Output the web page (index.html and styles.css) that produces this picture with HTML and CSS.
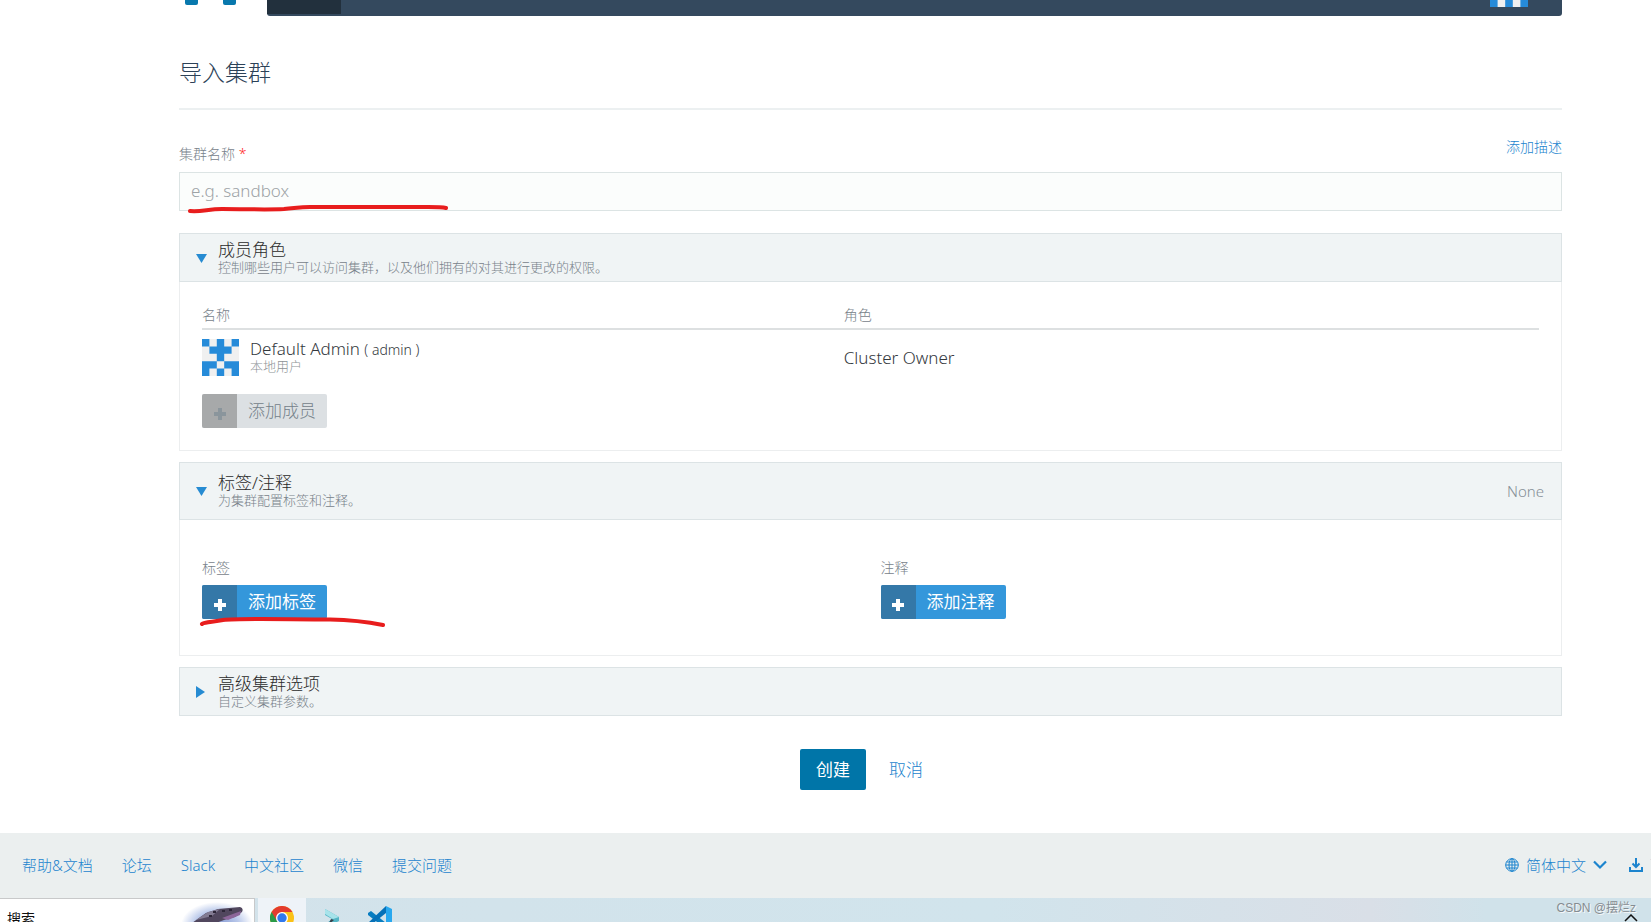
FILE: index.html
```html
<!DOCTYPE html>
<html lang="zh-CN">
<head>
<meta charset="utf-8">
<title>导入集群</title>
<link rel="stylesheet" href="styles.css">
</head>
<body>
<svg class="defs" aria-hidden="true">
  <symbol id="avatar" viewBox="0 0 5 5" preserveAspectRatio="none">
    <rect width="5" height="5" fill="#f0f0f0"/>
    <path fill="#268bd9" d="M0 0h1v1H0zM2 0h1v1H2zM4 0h1v1H4zM1 1h3v1H1zM2 2h1v1H2zM0 3h2v1H0zM3 3h2v1H3zM0 4h1v1H0zM2 4h1v1H2zM4 4h1v1H4z"/>
  </symbol>
  <symbol id="plus" viewBox="0 0 14 14"><path fill="currentColor" d="M5 1h4v4h4v4H9v4H5V9H1V5h4z"/></symbol>
</svg>
<div class="page">
  <header class="topbar">
    <div class="logo"><span></span><span></span></div>
    <nav class="nav">
      <span class="nav-home"></span>
      <svg class="nav-avatar" aria-hidden="true"><use href="#avatar"/></svg>
    </nav>
  </header>

  <main class="content">
    <h1 class="title">导入集群</h1>

    <div class="field">
      <div class="field-head">
        <label for="cluster-name" class="label">集群名称 <span class="required">*</span></label>
        <a href="#" class="link">添加描述</a>
      </div>
      <input id="cluster-name" class="input" type="text" placeholder="e.g. sandbox">
      <svg class="mark mark-name" viewBox="0 0 264 12" aria-hidden="true"><path d="M2 6C14 7 20 4 34 4C60 4 78 5 96 4C108 3 112 2 122 2L240 2Q254 2 258 3"/></svg>
    </div>

    <section class="panel">
      <header class="panel-head">
        <svg class="arrow" viewBox="0 0 12 12" aria-hidden="true"><path d="M0 2h11L5.500 11z"/></svg>
        <div class="panel-text"><h2>成员角色</h2><p>控制哪些用户可以访问集群，以及他们拥有的对其进行更改的权限。</p></div>
      </header>
      <div class="panel-body members">
        <table class="table">
          <thead><tr><th class="col-name">名称</th><th>角色</th></tr></thead>
          <tbody><tr>
            <td><div class="user">
              <svg class="avatar" aria-hidden="true"><use href="#avatar"/></svg>
              <div><div class="user-name">Default Admin <small>( admin )</small></div><div class="user-kind">本地用户</div></div>
            </div></td>
            <td>Cluster Owner</td>
          </tr></tbody>
        </table>
        <button class="add" type="button" disabled><span class="add-icon"><svg aria-hidden="true"><use href="#plus"/></svg></span><span class="add-text">添加成员</span></button>
      </div>
    </section>

    <section class="panel">
      <header class="panel-head tall">
        <svg class="arrow" viewBox="0 0 12 12" aria-hidden="true"><path d="M0 2h11L5.500 11z"/></svg>
        <div class="panel-text"><h2>标签/注释</h2><p>为集群配置标签和注释。</p></div>
        <span class="status">None</span>
      </header>
      <div class="panel-body columns">
        <div class="column">
          <div class="label">标签</div>
          <button class="add" type="button"><span class="add-icon"><svg aria-hidden="true"><use href="#plus"/></svg></span><span class="add-text">添加标签</span></button>
          <svg class="mark mark-label" viewBox="0 0 188 12" aria-hidden="true"><path d="M2 7C4 5 14 5 23 3C40 1 90 2.500 130 2.500Q158 3 183 8"/></svg>
        </div>
        <div class="column">
          <div class="label">注释</div>
          <button class="add" type="button"><span class="add-icon"><svg aria-hidden="true"><use href="#plus"/></svg></span><span class="add-text">添加注释</span></button>
        </div>
      </div>
    </section>

    <section class="panel">
      <header class="panel-head">
        <svg class="arrow" viewBox="0 0 12 12" aria-hidden="true"><path d="M0 0v12l9-6z"/></svg>
        <div class="panel-text"><h2>高级集群选项</h2><p>自定义集群参数。</p></div>
      </header>
    </section>

    <div class="actions">
      <button class="create" type="button">创建</button>
      <button class="cancel" type="button">取消</button>
    </div>
  </main>

  <footer class="footer">
    <nav class="footer-links">
      <a href="#">帮助&amp;文档</a><a href="#">论坛</a><a href="#">Slack</a><a href="#">中文社区</a><a href="#">微信</a><a href="#">提交问题</a>
    </nav>
    <div class="footer-tools">
      <a href="#" class="language">
        <svg width="14" height="14" viewBox="0 0 14 14" aria-hidden="true"><g fill="none" stroke="currentColor"><circle cx="7" cy="7" r="6.300"/><ellipse cx="7" cy="7" rx="3" ry="6.300"/><path d="M7 .7v12.600M.7 7h12.600M1.500 4h11M1.500 10h11"/></g></svg>
        <span>简体中文</span>
        <svg width="14" height="10" viewBox="0 0 14 10" aria-hidden="true"><path d="M1 1.500l6 6 6-6" fill="none" stroke="currentColor" stroke-width="2.200"/></svg>
      </a>
      <a href="#" class="download">
        <svg width="14" height="14" viewBox="0 0 14 14" aria-hidden="true"><path d="M1 9v4h12V9M7 0v9M3.500 5.500L7 9l3.500-3.500" fill="none" stroke="currentColor" stroke-width="2"/></svg>
        <span>下载CLI</span>
      </a>
    </div>
  </footer>

  <div class="taskbar">
    <div class="search"><span>搜索</span>
      <svg width="72" height="24" viewBox="0 0 72 24" aria-hidden="true">
        <defs><radialGradient id="glow"><stop offset="0" stop-color="#7f93cf"/><stop offset=".6" stop-color="#b9c8ea"/><stop offset="1" stop-color="#fff"/></radialGradient></defs>
        <ellipse cx="35" cy="26" rx="36" ry="23" fill="url(#glow)"/>
        <path d="M10 24L24 14 36 10 58 8Q62 9 60 13L53 18 42 21 34 24z" fill="#51475e"/>
        <path d="M14 21l12-8 12-3-8 7z" fill="#827b92"/><path d="M40 19l19-7-1 4-12 5z" fill="#8c6699"/>
        <path d="M31 13h3M40 12h3M27 17h3M47 11h3" stroke="#2d2638" stroke-width="2"/>
      </svg>
    </div>
    <div class="task active">
      <svg width="24" height="24" viewBox="0 0 24 24" aria-hidden="true"><circle cx="12" cy="12" r="12" fill="#fbc116"/><path d="M12 12L1.600 6A12 12 0 0 0 12 24z" fill="#2a9b48"/><path d="M1.600 6A12 12 0 0 1 22.400 6H12l-5 9z" fill="#e33b2e"/><circle cx="12" cy="12" r="6" fill="#fff"/><circle cx="12" cy="12" r="4.700" fill="#3179ed"/></svg>
    </div>
    <div class="task">
      <svg width="24" height="24" viewBox="0 0 24 24" aria-hidden="true"><path d="M5 3l14 8v4L5 22l2-5 5-4-7-4z" fill="#55b5c5"/><path d="M5 3l14 8-6 2-8-5z" fill="#a7e3ea"/><path d="M11 13l3 1-6 5z" fill="#38414b"/></svg>
    </div>
    <div class="task">
      <svg width="24" height="24" viewBox="0 0 24 24" aria-hidden="true"><path d="M0 7l3-2 15 12v6L0 9z" fill="#087dc1"/><path d="M0 17L18 0v7L3 19z" fill="#0671b8"/><path d="M18 0l6 3v18l-6 3z" fill="#28a8ef"/></svg>
    </div>
    <div class="tray">
      <span class="watermark">CSDN @摆烂z</span>
      <svg class="tray-arrow" width="14" height="8" viewBox="0 0 14 8" aria-hidden="true"><path d="M1 7l6-6 6 6" fill="none" stroke="#111" stroke-width="1.500"/></svg>
    </div>
  </div>
</div>
</body>
</html>
```
FILE: styles.css
```css
* { box-sizing: border-box; }
body {
  margin: 0;
  overflow: hidden;
  background: #fff;
  color: #33383d;
  font: 300 17px/20px "Noto Sans", "Noto Sans CJK SC", sans-serif;
}
button, input { font: inherit; }
button { border: 0; padding: 0; cursor: pointer; }
a { color: #1c84ce; text-decoration: none; }
h1, h2, p { margin: 0; font-weight: 300; }
.defs { position: absolute; width: 0; height: 0; }
.page { height: 100vh; display: flex; flex-direction: column; overflow: hidden; }

.topbar { display: flex; height: 16px; flex: none; margin: 0 89px 0 179px; }
.logo { display: flex; width: 88px; gap: 25px; padding-left: 6px; }
.logo span { width: 13px; height: 5px; background: #0878ad; border-radius: 0 0 2px 2px; }
.nav { flex: 1; display: flex; justify-content: space-between; background: #34495e; border-radius: 0 0 3px 3px; }
.nav-home { width: 74px; height: 14px; background: #22303d; }
.nav-avatar { width: 38px; height: 38px; margin: -31px 34px 0 0; }

.content { flex: 1; margin: 0 89px 0 179px; }
.title { padding: 40px 0 20px; border-bottom: 2px solid #ecf0f1; font-size: 23px; line-height: 32px; color: #2c4157; }
.field { position: relative; padding-top: 27px; }
.field-head { display: flex; justify-content: space-between; height: 35px; }
.label { font-size: 14px; color: #78828a; }
.field-head .label { padding-top: 7px; }
.required { color: #f22; }
.link { font-size: 14px; }
.input { display: block; width: 100%; height: 39px; padding: 0 11px 2px; border: 1px solid #dce4e4; border-radius: 0; background: #fbfdfc; color: #33383d; }
.input::placeholder { color: #9da3a6; opacity: 1; }
.mark { position: absolute; fill: none; stroke: #e81d1d; stroke-width: 4; stroke-linecap: round; overflow: visible; }
.mark-name { left: 9px; bottom: -6px; width: 264px; height: 12px; }
.mark-label { left: -2px; top: 59px; width: 188px; height: 12px; }

.panel { margin-top: 11px; border: 1px solid #eceeef; }
.field + .panel { margin-top: 22px; }
.panel-head { display: flex; align-items: center; height: 49px; margin: -1px; padding: 0 17px 0 16px; border: 1px solid #dce3e5; background: #f0f4f5; }
.panel-head.tall { height: 58px; }
.arrow { width: 12px; height: 12px; margin-right: 10px; fill: #268bd2; }
.panel-text { flex: 1; }
.panel-text h2 { font-size: 17px; line-height: 18px; color: #2b2b2b; }
.panel-text p { font-size: 13px; line-height: 16px; color: #78828a; }
.status { font-size: 15px; color: #858f95; }
.panel-body { padding: 22px; }
.table { width: 100%; border-collapse: collapse; table-layout: fixed; }
.table th { padding: 2px 0; height: 26px; border-bottom: 2px solid #dde0e1; font-size: 14px; font-weight: 300; text-align: left; vertical-align: top; color: #78828a; }
.col-name { width: 48%; }
.table td { padding: 9px 0 18px; }
.user { display: flex; gap: 11px; }
.user small { font-size: 14px; }
.user-name { line-height: 19px; }
.user-kind { font-size: 13px; line-height: 14px; color: #8d9396; }
.avatar { width: 37px; height: 37px; }
.add { display: flex; height: 34px; border-radius: 2px; overflow: hidden; background: #3497db; color: #fff; font-size: 17px; font-weight: 400; }
.add-icon { display: flex; width: 35px; height: 100%; align-items: center; justify-content: center; background: #3478a8; padding-top: 5px; }
.add-icon svg { width: 14px; height: 14px; }
.add-text { padding: 0 11px; line-height: 34px; }
.add:disabled { background: #dce0e3; color: #8a959c; font-weight: 300; }
.add:disabled .add-text { color: #74808a; }
.add:disabled .add-icon { background: #a7a9aa; }
.columns { display: grid; grid-template-columns: 1fr 1fr; gap: 20px; padding: 39px 22px 36px; }
.column { position: relative; display: flex; flex-direction: column; align-items: flex-start; gap: 7px; }

.actions { display: flex; justify-content: center; gap: 23px; padding: 33px 18px 43px 0; }
.create { height: 41px; padding: 0 16px; background: #0075a8; color: #fff; border-radius: 2px; font-size: 17px; font-weight: 400; }
.cancel { background: none; color: #1c84ce; font-size: 17px; }

.footer { display: flex; flex: none; justify-content: space-between; align-items: center; height: 65px; padding: 0 0 2px 22px; background: #ebefef; font-size: 15px; }
.footer-links { display: flex; gap: 29px; }
.footer-tools { display: flex; width: 146px; gap: 22px; white-space: nowrap; }
.footer-tools a { display: flex; flex: none; align-items: center; gap: 7px; }

.taskbar { display: flex; flex: none; height: 24px; overflow: hidden; background: linear-gradient(90deg, #d3e2ea, #d1e4ec 60%, #d9dfe7 83%, #d0e2ea 90%); }
.search { display: flex; justify-content: space-between; width: 255px; margin-right: 3px; padding: 0 0 0 7px; border: solid #c8c9ca; border-width: 1px 1px 0 0; background: #fff; color: #111; font-size: 14px; font-weight: 400; }
.search span { padding-top: 10px; }
.task { width: 48px; padding: 8px 12px 0; }
.task.active { background: #eef3f8; margin-right: 2px; }
.tray { margin-left: auto; position: relative; padding-right: 15px; line-height: 16px; }
.watermark { font: 12px/16px "Liberation Sans", "Noto Sans CJK SC", sans-serif; color: #858c91; text-shadow: 1px 1px #f5f7f8; }
.tray-arrow { position: absolute; right: 13px; top: 16px; }
```
